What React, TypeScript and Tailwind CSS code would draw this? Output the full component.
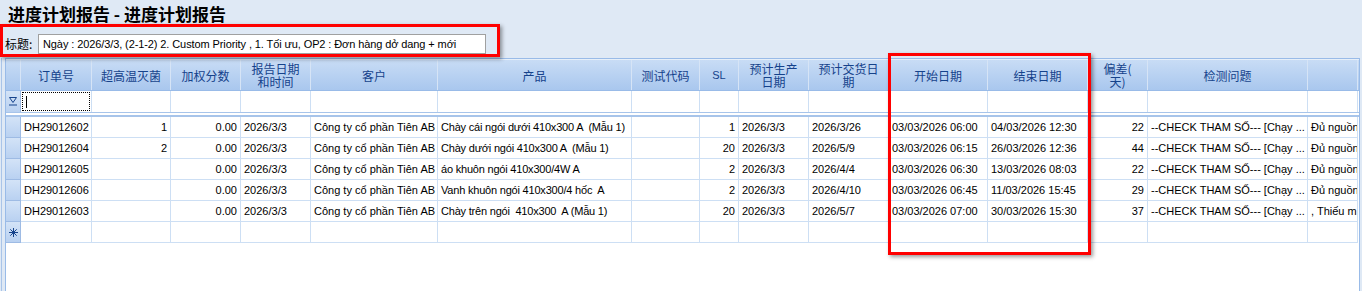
import React from "react";

type Col = { w: number; head: React.ReactNode; align: "left" | "right"; latin?: boolean; tight?: boolean };

const cols: Col[] = [
  { w: 71, head: "订单号", align: "left" },
  { w: 79, head: "超高温灭菌", align: "right" },
  { w: 70, head: "加权分数", align: "right" },
  { w: 70, head: <>报告日期<br />和时间</>, align: "left" },
  { w: 127, head: "客户", align: "left" },
  { w: 194, head: "产品", align: "left", tight: true },
  { w: 68, head: "测试代码", align: "left" },
  { w: 39, head: "SL", align: "right", latin: true },
  { w: 70, head: <>预计生产<br />日期</>, align: "left" },
  { w: 80, head: <>预计交货日<br />期</>, align: "left" },
  { w: 99, head: "开始日期", align: "left" },
  { w: 100, head: "结束日期", align: "left" },
  { w: 60, head: <>偏差(<br />天)</>, align: "right" },
  { w: 160, head: "检测问题", align: "left" },
  { w: 50, head: "", align: "left" },
];

const check = "--CHECK THAM SỐ--- [Chạy ...";
const cty = "Công ty cổ phần Tiên AB";

const rows: string[][] = [
  ["DH29012602", "1", "0.00", "2026/3/3", cty, "Chày cái ngói dưới 410x300 A  (Mẫu 1)", "", "1", "2026/3/3", "2026/3/26", "03/03/2026 06:00", "04/03/2026 12:30", "22", check, "Đủ nguồn"],
  ["DH29012604", "2", "0.00", "2026/3/3", cty, "Chày dưới ngói 410x300 A  (Mẫu 1)", "", "20", "2026/3/3", "2026/5/9", "03/03/2026 06:15", "26/03/2026 12:36", "44", check, "Đủ nguồn"],
  ["DH29012605", "", "0.00", "2026/3/3", cty, "áo khuôn ngói 410x300/4W A", "", "2", "2026/3/3", "2026/4/4", "03/03/2026 06:30", "13/03/2026 08:03", "22", check, "Đủ nguồn"],
  ["DH29012606", "", "0.00", "2026/3/3", cty, "Vanh khuôn ngói 410x300/4 hốc  A", "", "2", "2026/3/3", "2026/4/10", "03/03/2026 06:45", "11/03/2026 15:45", "29", check, "Đủ nguồn"],
  ["DH29012603", "", "0.00", "2026/3/3", cty, "Chày trên ngói  410x300  A (Mẫu 1)", "", "20", "2026/3/3", "2026/5/7", "03/03/2026 07:00", "30/03/2026 15:30", "37", check, ", Thiếu m"],
];

function FilterIcon() {
  return (
    <svg width="8" height="9" viewBox="0 0 8 9">
      <path d="M0.5 0.5 H7.5 L4 5.5 Z" fill="none" stroke="#15428b" strokeWidth="1" />
      <path d="M0 8 H8" stroke="#15428b" strokeWidth="1" />
    </svg>
  );
}

function NewRowIcon() {
  return (
    <svg width="9" height="9" viewBox="0 0 9 9" stroke="#15428b" strokeWidth="1">
      <path d="M4.5 0 V9 M0 4.5 H9 M1.3 1.3 L7.7 7.7 M7.7 1.3 L1.3 7.7" />
    </svg>
  );
}

const indicator =
  "w-[15px] shrink-0 border-r border-b border-[#9ebbe4] bg-gradient-to-b from-[#d3e3f7] to-[#b9d1f1] flex items-center justify-center";

export default function App() {
  return (
    <div className="relative w-[1362px] h-[291px] overflow-hidden bg-[#dfe9f5] font-['Liberation_Sans','Noto_Sans_CJK_SC',sans-serif] text-[11px] text-black">
      {/* title */}
      <div className="h-[31px] pl-[8px] pt-[2px] text-[17px] font-bold leading-[24px] font-['Noto_Sans_CJK_SC',sans-serif]">
        进度计划报告 - 进度计划报告
      </div>

      {/* caption row */}
      <div className="h-[26px] flex items-center pl-[5px]">
        <span className="text-[12px] font-['Noto_Sans_CJK_SC',sans-serif] w-[33px]">标题:</span>
        <div className="w-[448px] h-[20px] bg-white border border-[#a0a0a0] flex items-center pl-[4px] text-[11px] whitespace-pre tracking-[-0.1px]">
          Ngày : 2026/3/3, (2-1-2) 2. Custom Priority , 1. Tối ưu, OP2 : Đơn hàng dở dang + mới
        </div>
      </div>

      {/* grid panel */}
      <div className="ml-[1px] h-[234px] border-l border-[#a9c4e8] pl-[3px]">
        <div className="h-full mt-[1px] w-[1355px] border-l border-t border-r border-[#99bbe8] bg-white overflow-hidden">
          {/* header */}
          <div className="flex h-[32px] border-t border-[#e6eff9] border-b border-b-[#99bbe8] bg-gradient-to-b from-[#c8dcf5] to-[#a9c7ee]">
            <div className="w-[15px] shrink-0 border-r border-[#d6e4f6]" />
            {cols.map((c, i) => (
              <div
                key={i}
                style={{ width: c.w }}
                className={
                  "shrink-0 border-r border-[#d6e4f6] flex items-center justify-center text-center text-[#15428b] leading-[13px] " +
                  (c.latin ? "text-[11px]" : "text-[12px] font-['Noto_Sans_CJK_SC',sans-serif]")
                }
              >
                <span>{c.head}</span>
              </div>
            ))}
          </div>

          {/* filter row */}
          <div className="flex h-[21px]">
            <div className="w-[15px] shrink-0 border-r border-[#9ebbe4] bg-gradient-to-b from-[#d3e3f7] to-[#b9d1f1] flex items-center justify-center">
              <FilterIcon />
            </div>
            {cols.map((c, i) => (
              <div key={i} style={{ width: c.w }} className="shrink-0 border-r border-[#cddff4] p-[1px]">
                {i === 0 && (
                  <div className="h-full border border-dotted border-black flex items-center pl-[3px]">
                    <div className="w-[1px] h-[12px] bg-black" />
                  </div>
                )}
              </div>
            ))}
          </div>

          {/* separator */}
          <div className="h-[5px] border-t border-b-2 border-[#a7c4ea] bg-white" />

          {/* data rows */}
          {rows.map((r, ri) => (
            <div key={ri} className="flex h-[21px]">
              <div className={indicator} />
              {cols.map((c, i) => (
                <div
                  key={i}
                  style={{ width: c.w }}
                  className={
                    "shrink-0 border-r border-b border-[#cddff4] flex items-center overflow-hidden whitespace-pre leading-[20px] " +
                    (c.align === "right" ? "justify-end pr-[3px]" : "pl-[3px]") +
                    (c.tight ? " tracking-[-0.2px]" : "")
                  }
                >
                  {r[i]}
                </div>
              ))}
            </div>
          ))}

          {/* new row */}
          <div className="flex h-[21px]">
            <div className={indicator}>
              <NewRowIcon />
            </div>
            {cols.map((c, i) => (
              <div key={i} style={{ width: c.w }} className="shrink-0 border-r border-b border-[#cddff4]" />
            ))}
          </div>
        </div>
      </div>

      {/* red annotation boxes */}
      <div className="absolute left-0 top-[24px] w-[500px] h-[33px] border-[3px] border-[#ff0000] shadow-[2px_2px_4px_rgba(0,0,0,0.4)]" />
      <div className="absolute left-[888px] top-[53px] w-[203px] h-[202px] border-[3px] border-[#ff0000] shadow-[2px_2px_4px_rgba(0,0,0,0.4)]" />
    </div>
  );
}
